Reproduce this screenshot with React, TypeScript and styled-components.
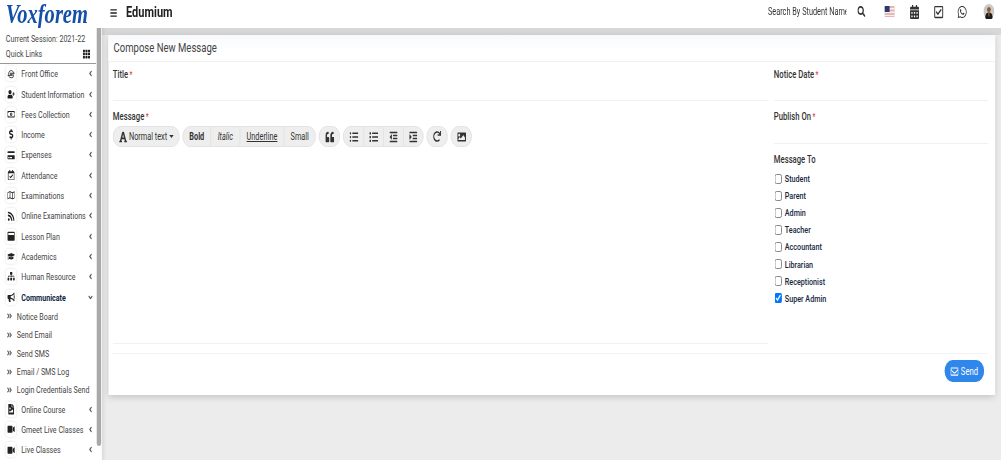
import styled, { createGlobalStyle } from "styled-components";
import type { IconType } from "react-icons";
import {
  FaAngleDoubleRight,
  FaAngleDown,
  FaAngleLeft,
  FaBars,
  FaBullhorn,
  FaCalendarAlt,
  FaCreditCard,
  FaDollarSign,
  FaFileImage,
  FaFont,
  FaGraduationCap,
  FaImage,
  FaIndent,
  FaIoxhost,
  FaList,
  FaListUl,
  FaOutdent,
  FaQuoteLeft,
  FaRedo,
  FaRegCalendarCheck,
  FaRegCheckSquare,
  FaRegEnvelope,
  FaRegMap,
  FaRegMoneyBillAlt,
  FaRss,
  FaSearch,
  FaSitemap,
  FaTh,
  FaUserPlus,
  FaVideo,
  FaWhatsapp,
  FaWindowMaximize,
} from "react-icons/fa";

// the screenshot is a 1366px wide page squeezed horizontally into 1001px
const squeeze = 1001 / 1366;

const GlobalStyle = createGlobalStyle`
  html, body {
    margin: 0;
    height: 460px;
    overflow: hidden;
    background: #ececec;
  }
  * {
    box-sizing: border-box;
  }
`;

const Page = styled.div`
  width: 1366px;
  height: 460px;
  overflow: hidden;
  transform: scaleX(${squeeze});
  transform-origin: 0 0;
  font-family: Roboto, "Liberation Sans", sans-serif;
  font-size: 9.7px;
  color: #444;
  display: flex;
  flex-direction: column;
`;

const TopBar = styled.header`
  height: 28px;
  flex: none;
  padding-bottom: 5px;
  background: #fff;
  display: flex;
  align-items: center;
`;

const Logo = styled.div`
  width: 139px;
  height: 28px;
  align-self: flex-start;
  padding-left: 8px;
  font-family: "Liberation Serif", serif;
  font-style: italic;
  font-weight: 700;
  font-size: 28px;
  line-height: 28px;
  color: #1450a8;
  white-space: nowrap;
`;

const Burger = styled.span`
  margin-left: 11px;
  margin-top: 3px;
  display: flex;
  font-size: 10px;
  color: #222;
`;

const Brand = styled.div`
  margin-left: 12px;
  font-size: 15px;
  font-weight: 700;
  color: #222;
`;

const SearchBox = styled.div`
  margin-left: auto;
  width: 107px;
  overflow: hidden;
  white-space: nowrap;
  font-size: 10px;
  color: #333;
`;

const TopIcon = styled.span<{ $gap: number }>`
  margin-left: ${(p) => p.$gap}px;
  display: flex;
  color: #333;
  font-size: 14px;
`;

const Avatar = styled.span`
  margin: 0 9px 0 22px;
  display: flex;
`;

const Body = styled.div`
  flex: 1;
  display: flex;
  min-height: 0;
`;

const Sidebar = styled.aside`
  width: 131px;
  flex: none;
  background: #fff;
  display: flex;
  flex-direction: column;
`;

const Session = styled.div`
  height: 36px;
  flex: none;
  padding: 3px 6px 0 8px;
  border-bottom: 1px solid #999;
  line-height: 15px;
  white-space: nowrap;
`;

const QuickRow = styled.div`
  display: flex;
  justify-content: space-between;
  align-items: center;
`;

const GridIcon = styled.span`
  display: flex;
  font-size: 10px;
  color: #222;
  margin-right: 2px;
`;

const NavRow = styled.div<{ $active?: boolean }>`
  height: 20.3px;
  flex: none;
  display: flex;
  align-items: center;
  padding: 0 3px 0 8px;
  color: ${(p) => (p.$active ? "#10253f" : "#444")};
  font-weight: ${(p) => (p.$active ? 700 : 400)};
  white-space: nowrap;
`;

const NavIcon = styled.span`
  width: 14px;
  height: 15px;
  margin-right: 7px;
  flex: none;
  display: flex;
  align-items: center;
  justify-content: center;
  font-size: 10.5px;
  color: #222;
  border-radius: 3px;
  box-shadow: 0 0 3px rgba(0, 0, 0, 0.15);
`;

const NavArrow = styled.span`
  margin-left: auto;
  display: flex;
  font-size: 9px;
  color: #555;
`;

const SubRow = styled.div`
  height: 18.4px;
  flex: none;
  display: flex;
  align-items: center;
  gap: 6px;
  padding-left: 9px;
  white-space: nowrap;
`;

const SubIcon = styled.span`
  display: flex;
  font-size: 8px;
  color: #555;
`;

const NavList = styled.div`
  margin-top: -0.4px;
`;

const ScrollGutter = styled.div`
  width: 8px;
  flex: none;
  background: #fff;
`;

const ScrollThumb = styled.div`
  width: 6px;
  height: 418px;
  margin-left: 1px;
  border-radius: 0 0 4px 4px;
  background: #a9a9a9;
`;

const Main = styled.main`
  flex: 1;
  min-width: 0;
  padding: 7px 8px 0 9px;
  background: linear-gradient(to bottom, #d8d8d8 7px, #ececec 7px);
  box-shadow: inset 6px 0 4px -3px rgba(0, 0, 0, 0.08);
`;

const Card = styled.section`
  height: 360px;
  background: #fff;
  box-shadow: 0 2px 8px rgba(0, 0, 0, 0.18);
  display: flex;
  flex-direction: column;
`;

const CardTitle = styled.h3`
  margin: 0;
  height: 27px;
  flex: none;
  padding: 0 7px;
  border-bottom: 1px solid #f0f0f0;
  background: linear-gradient(to bottom, #f8f9fb, #fff 60%);
  font-size: 13px;
  font-weight: 400;
  line-height: 26px;
  color: #444;
`;

const FormGrid = styled.div`
  flex: 1;
  display: grid;
  grid-template-columns: 895px 292px;
  column-gap: 7px;
  padding: 0 10px 0 6px;
`;

const Column = styled.div`
  display: flex;
  flex-direction: column;
`;

const Field = styled.div<{ $h: number; $top: number }>`
  height: ${(p) => p.$h}px;
  flex: none;
  padding-top: ${(p) => p.$top}px;
  border-bottom: 1px solid #f1f1f1;
`;

const Label = styled.label`
  display: block;
  font-size: 10.5px;
  line-height: 12px;
  font-weight: 500;
  color: #333;
`;

const Req = styled.span`
  color: #e53935;
  margin-left: 2px;
  font-size: 9px;
`;

const MessageBlock = styled.div`
  height: 243px;
  padding-top: 10px;
  border-bottom: 1px solid #f1f1f1;
`;

const Toolbar = styled.div`
  margin-top: 3px;
  display: flex;
  gap: 4px;
`;

const Group = styled.div`
  height: 21px;
  display: flex;
  border: 1px solid #e0e0e0;
  border-radius: 11px;
  background: #eeeeee;
  overflow: hidden;
`;

const ToolButton = styled.span<{ $w: number }>`
  width: ${(p) => p.$w}px;
  display: flex;
  align-items: center;
  justify-content: center;
  gap: 2px;
  font-size: 10px;
  color: #333;
  white-space: nowrap;
  & + & {
    border-left: 1px solid #e0e0e0;
  }
`;

const BoldText = styled.b`
  font-weight: 700;
`;

const ItalicText = styled.i`
  font-style: italic;
`;

const UnderText = styled.u``;

const Caret = styled.span`
  width: 0;
  height: 0;
  margin-left: 1px;
  border: 3px solid transparent;
  border-top-color: #333;
  border-bottom-width: 0;
`;

const RecipientTitle = styled(Label)`
  margin-top: 10px;
`;

const Recipients = styled.div`
  margin-top: 4px;
  display: flex;
  flex-direction: column;
`;

const Recipient = styled.label`
  height: 17.1px;
  display: flex;
  align-items: center;
  gap: 4px;
  font-size: 9.8px;
  font-weight: 500;
  color: #14263d;
`;

const Check = styled.input`
  width: 10px;
  height: 10px;
  margin: 0 0 0 1px;
`;

const CardFooter = styled.div`
  height: 42px;
  flex: none;
  margin: 0 10px 0 6px;
  border-top: 1px solid #f3f3f3;
  padding: 6px 5px 0 0;
  display: flex;
  justify-content: flex-end;
`;

const SendButton = styled.button`
  width: 54px;
  height: 22px;
  padding: 0;
  border: 0;
  border-radius: 11px;
  background: #2f86eb;
  color: #fff;
  font-family: inherit;
  font-size: 10.5px;
  font-weight: 400;
  display: flex;
  align-items: center;
  justify-content: center;
  gap: 3px;
`;

type NavItem = { label: string; icon: IconType };

const topNav: NavItem[] = [
  { label: "Front Office", icon: FaIoxhost },
  { label: "Student Information", icon: FaUserPlus },
  { label: "Fees Collection", icon: FaRegMoneyBillAlt },
  { label: "Income", icon: FaDollarSign },
  { label: "Expenses", icon: FaCreditCard },
  { label: "Attendance", icon: FaRegCalendarCheck },
  { label: "Examinations", icon: FaRegMap },
  { label: "Online Examinations", icon: FaRss },
  { label: "Lesson Plan", icon: FaWindowMaximize },
  { label: "Academics", icon: FaGraduationCap },
  { label: "Human Resource", icon: FaSitemap },
];

const subNav = ["Notice Board", "Send Email", "Send SMS", "Email / SMS Log", "Login Credentials Send"];

const bottomNav: NavItem[] = [
  { label: "Online Course", icon: FaFileImage },
  { label: "Gmeet Live Classes", icon: FaVideo },
  { label: "Live Classes", icon: FaVideo },
];

const recipients = ["Student", "Parent", "Admin", "Teacher", "Accountant", "Librarian", "Receptionist", "Super Admin"];

function Nav({ item }: { item: NavItem }) {
  const Icon = item.icon;
  return (
    <NavRow>
      <NavIcon>
        <Icon />
      </NavIcon>
      {item.label}
      <NavArrow>
        <FaAngleLeft />
      </NavArrow>
    </NavRow>
  );
}

function App() {
  return (
    <Page>
      <GlobalStyle />
      <TopBar>
        <Logo>Voxforem</Logo>
        <Burger>
          <FaBars />
        </Burger>
        <Brand>Edumium</Brand>
        <SearchBox>Search By Student Name</SearchBox>
        <TopIcon $gap={15}>
          <FaSearch size={11} />
        </TopIcon>
        <TopIcon $gap={26}>
          <svg width="14" height="11" viewBox="0 0 14 11">
            <rect width="14" height="11" fill="#e8b4b8" />
            <rect y="2" width="14" height="1.5" fill="#f5f0f0" />
            <rect y="5.5" width="14" height="1.5" fill="#f5f0f0" />
            <rect y="9" width="14" height="1" fill="#f5f0f0" />
            <rect width="7" height="6" fill="#2b3a6b" />
          </svg>
        </TopIcon>
        <TopIcon $gap={20}>
          <FaCalendarAlt />
        </TopIcon>
        <TopIcon $gap={19}>
          <FaRegCheckSquare />
        </TopIcon>
        <TopIcon $gap={18}>
          <FaWhatsapp />
        </TopIcon>
        <Avatar>
          <svg width="15" height="15" viewBox="0 0 15 15">
            <circle cx="7.5" cy="7.5" r="7.5" fill="#c9c9c9" />
            <circle cx="7.5" cy="5.5" r="2.6" fill="#8a5a3a" />
            <path d="M2.5 14c0-4 2-5.5 5-5.5s5 1.5 5 5.5a7.5 7.5 0 0 1-10 0z" fill="#1c1c1c" />
            <path d="M6.8 8.6h1.4l-.2 4h-1z" fill="#d9772b" />
          </svg>
        </Avatar>
      </TopBar>
      <Body>
        <Sidebar>
          <Session>
            Current Session: 2021-22
            <QuickRow>
              Quick Links
              <GridIcon>
                <FaTh />
              </GridIcon>
            </QuickRow>
          </Session>
          <NavList>
            {topNav.map((item) => (
              <Nav key={item.label} item={item} />
            ))}
            <NavRow $active>
              <NavIcon>
                <FaBullhorn />
              </NavIcon>
              Communicate
              <NavArrow>
                <FaAngleDown />
              </NavArrow>
            </NavRow>
            {subNav.map((label) => (
              <SubRow key={label}>
                <SubIcon>
                  <FaAngleDoubleRight />
                </SubIcon>
                {label}
              </SubRow>
            ))}
            {bottomNav.map((item) => (
              <Nav key={item.label} item={item} />
            ))}
          </NavList>
        </Sidebar>
        <ScrollGutter>
          <ScrollThumb />
        </ScrollGutter>
        <Main>
          <Card>
            <CardTitle>Compose New Message</CardTitle>
            <FormGrid>
              <Column>
                <Field $h={39} $top={7}>
                  <Label>
                    Title<Req>*</Req>
                  </Label>
                </Field>
                <MessageBlock>
                  <Label>
                    Message<Req>*</Req>
                  </Label>
                  <Toolbar>
                    <Group>
                      <ToolButton $w={89}>
                        <FaFont size={12} />
                        Normal text
                        <Caret />
                      </ToolButton>
                    </Group>
                    <Group>
                      <ToolButton $w={37}>
                        <BoldText>Bold</BoldText>
                      </ToolButton>
                      <ToolButton $w={40}>
                        <ItalicText>Italic</ItalicText>
                      </ToolButton>
                      <ToolButton $w={60}>
                        <UnderText>Underline</UnderText>
                      </ToolButton>
                      <ToolButton $w={43}>Small</ToolButton>
                    </Group>
                    <Group>
                      <ToolButton $w={27}>
                        <FaQuoteLeft size={12} />
                      </ToolButton>
                    </Group>
                    <Group>
                      <ToolButton $w={27}>
                        <FaListUl size={12} />
                      </ToolButton>
                      <ToolButton $w={27}>
                        <FaList size={12} />
                      </ToolButton>
                      <ToolButton $w={27}>
                        <FaOutdent size={12} />
                      </ToolButton>
                      <ToolButton $w={27}>
                        <FaIndent size={12} />
                      </ToolButton>
                    </Group>
                    <Group>
                      <ToolButton $w={27}>
                        <FaRedo size={11} />
                      </ToolButton>
                    </Group>
                    <Group>
                      <ToolButton $w={27}>
                        <FaImage size={12} />
                      </ToolButton>
                    </Group>
                  </Toolbar>
                </MessageBlock>
              </Column>
              <Column>
                <Field $h={39} $top={7}>
                  <Label>
                    Notice Date<Req>*</Req>
                  </Label>
                </Field>
                <Field $h={43} $top={10}>
                  <Label>
                    Publish On<Req>*</Req>
                  </Label>
                </Field>
                <RecipientTitle>Message To</RecipientTitle>
                <Recipients>
                  {recipients.map((name) => (
                    <Recipient key={name}>
                      <Check type="checkbox" readOnly checked={name === "Super Admin"} />
                      {name}
                    </Recipient>
                  ))}
                </Recipients>
              </Column>
            </FormGrid>
            <CardFooter>
              <SendButton>
                <FaRegEnvelope size={11} />
                Send
              </SendButton>
            </CardFooter>
          </Card>
        </Main>
      </Body>
    </Page>
  );
}

export default App;
